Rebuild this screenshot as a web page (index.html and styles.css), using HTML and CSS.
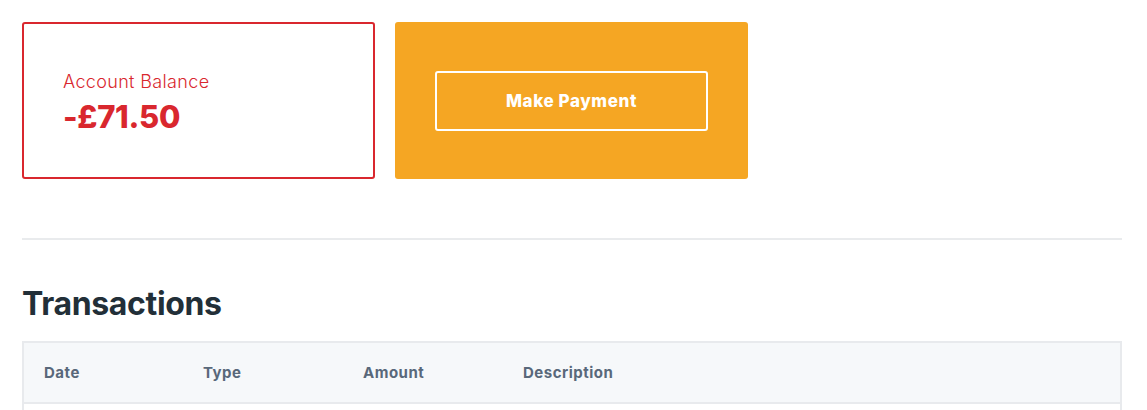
FILE: index.html
```html
<!DOCTYPE html>
<html>
<head>
<meta charset="utf-8">
<link rel="stylesheet" href="styles.css">
</head>
<body>
<div class="page">
  <div class="cards">
    <div class="card balance">
      <div class="balance-label">Account Balance</div>
      <div class="balance-value">-£71.50</div>
    </div>
    <div class="card pay">
      <button class="pay-btn">Make Payment</button>
    </div>
  </div>
  <hr class="divider">
  <h2 class="title">Transactions</h2>
  <table class="tx">
    <thead>
      <tr><th>Date</th><th>Type</th><th>Amount</th><th>Description</th></tr>
    </thead>
    <tbody>
      <tr><td></td><td></td><td></td><td></td></tr>
    </tbody>
  </table>
</div>
</body>
</html>
```
FILE: styles.css
```css
* { box-sizing: border-box; }
body {
  margin: 0;
  font-family: "Inter", "Lato", sans-serif;
  background: #fff;
}
.page {
  padding: 22px 25px 0 22px;
  width: 1147px;
}
.cards {
  display: flex;
  gap: 20px;
}
.card {
  width: 353px;
  height: 157px;
  border-radius: 3px;
}
.balance {
  border: 2px solid #d9272e;
  padding: 47px 39px 0;
  color: #d9272e;
}
.balance-label {
  font-size: 18px;
  font-weight: 300;
  line-height: 22px;
  letter-spacing: 0.35px;
}
.balance-value {
  font-size: 31px;
  font-weight: 800;
  line-height: 36px;
  margin-top: 6px;
  letter-spacing: -0.3px;
}
.pay {
  background: #f5a623;
  display: flex;
  align-items: center;
  padding-left: 40px;
}
.pay-btn {
  width: 273px;
  height: 60px;
  background: transparent;
  border: 2px solid #fff;
  border-radius: 3px;
  color: #fff;
  font-family: inherit;
  font-size: 17px;
  font-weight: 800;
  letter-spacing: 0.6px;
}
.divider {
  border: 0;
  border-top: 2px solid #e9ebed;
  margin: 59px 0 0;
  width: 1100px;
}
.title {
  margin: 44px 0 0;
  font-size: 32px;
  font-weight: 700;
  color: #222f38;
  line-height: 40px;
  letter-spacing: -0.35px;
}
.tx {
  margin-top: 17px;
  width: 1100px;
  border-collapse: collapse;
  border: 2px solid #e8eaed;
}
.tx th {
  background: #f6f8fa;
  text-align: left;
  font-size: 15px;
  font-weight: 700;
  color: #59687a;
  height: 61px;
  padding: 0 20px;
  width: 160px;
  border-bottom: 2px solid #e8eaed;
  letter-spacing: 0.5px;
}
.tx th:last-child { width: auto; }
.tx td { height: 50px; }
```
